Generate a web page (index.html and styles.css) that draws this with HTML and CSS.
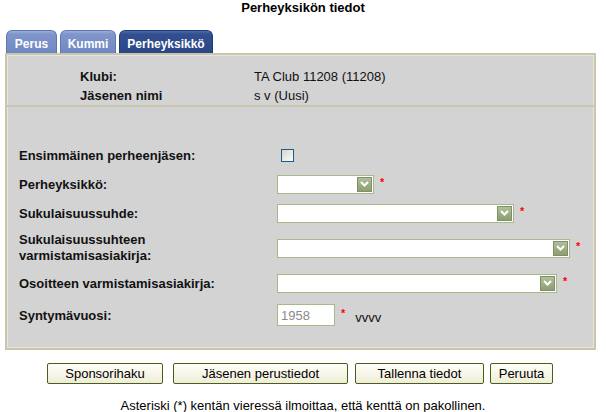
FILE: index.html
```html
<!DOCTYPE html>
<html lang="fi">
<head>
<meta charset="utf-8">
<title>Perheyksikön tiedot</title>
<link rel="stylesheet" href="styles.css">
</head>
<body>
<h1 class="title">Perheyksikön tiedot</h1>
<div class="tabs">
  <span class="tab">Perus</span>
  <span class="tab">Kummi</span>
  <span class="tab tab--active">Perheyksikkö</span>
</div>
<div class="panel">
  <div class="info">
    <div class="info-label">Klubi:</div><div class="info-value">TA Club 11208 (11208)</div>
    <div class="info-label">Jäsenen nimi</div><div class="info-value">s v (Uusi)</div>
  </div>
  <div class="form">
    <div class="row">
      <div class="label">Ensimmäinen perheenjäsen:</div>
      <div class="control"><span class="checkbox"></span></div>
    </div>
    <div class="row">
      <div class="label">Perheyksikkö:</div>
      <div class="control">
        <span class="select select--s"><span class="arrow"><svg width="9" height="6" viewBox="0 0 9 6"><path d="M1 1 L4.5 4.5 L8 1" fill="none" stroke="#fff" stroke-width="2"/></svg></span></span>
        <span class="req">*</span>
      </div>
    </div>
    <div class="row">
      <div class="label">Sukulaisuussuhde:</div>
      <div class="control">
        <span class="select select--m"><span class="arrow"><svg width="9" height="6" viewBox="0 0 9 6"><path d="M1 1 L4.5 4.5 L8 1" fill="none" stroke="#fff" stroke-width="2"/></svg></span></span>
        <span class="req">*</span>
      </div>
    </div>
    <div class="row row--tall">
      <div class="label">Sukulaisuussuhteen<br>varmistamisasiakirja:</div>
      <div class="control">
        <span class="select select--xl"><span class="arrow"><svg width="9" height="6" viewBox="0 0 9 6"><path d="M1 1 L4.5 4.5 L8 1" fill="none" stroke="#fff" stroke-width="2"/></svg></span></span>
        <span class="req">*</span>
      </div>
    </div>
    <div class="row">
      <div class="label">Osoitteen varmistamisasiakirja:</div>
      <div class="control">
        <span class="select select--l"><span class="arrow"><svg width="9" height="6" viewBox="0 0 9 6"><path d="M1 1 L4.5 4.5 L8 1" fill="none" stroke="#fff" stroke-width="2"/></svg></span></span>
        <span class="req">*</span>
      </div>
    </div>
    <div class="row row--last">
      <div class="label">Syntymävuosi:</div>
      <div class="control">
        <span class="year">1958</span>
        <span class="req">*</span>
        <span class="hint">vvvv</span>
      </div>
    </div>
  </div>
</div>
<div class="buttons">
  <button class="btn btn--sponsor">Sponsorihaku</button>
  <button class="btn btn--member">Jäsenen perustiedot</button>
  <button class="btn btn--save">Tallenna tiedot</button>
  <button class="btn btn--cancel">Peruuta</button>
</div>
<p class="note">Asteriski (*) kentän vieressä ilmoittaa, että kenttä on pakollinen.</p>
</body>
</html>
```
FILE: styles.css
```css
* { box-sizing: border-box; }
html, body { margin: 0; padding: 0; background: #fff; }
body {
  font-family: "Liberation Sans", Arial, sans-serif;
  font-size: 13px;
  color: #111;
  width: 606px;
}
.title {
  margin: 0;
  font-size: 13px;
  font-weight: bold;
  line-height: 16px;
  text-align: center;
  color: #000;
}
.tabs {
  display: flex;
  gap: 3px;
  margin-top: 14px;
  padding-left: 6px;
  height: 23px;
}
.tab {
  display: flex;
  align-items: center;
  justify-content: center;
  height: 23px;
  padding: 3px 8px 0;
  font-size: 12px;
  font-weight: bold;
  color: #fff;
  border: 1px solid #5f75ad;
  border-bottom: none;
  border-radius: 6px 6px 0 0;
  background: linear-gradient(#9cafdc 0, #8096cb 3px, #7088c2 100%);
}
.tab:nth-child(1) { width: 51px; }
.tab:nth-child(2) { width: 56px; }
.tab--active {
  width: 94px;
  border-color: #203a78;
  background: linear-gradient(#4f6aa8 0, #32508f 3px, #2a4686 100%);
}
.panel {
  width: 591px;
  margin-left: 5px;
  background: #d3d3d3;
  border: 2px solid #c9c5ae;
  box-shadow: inset 0 0 0 1px #e9e6d6;
}
.info {
  display: grid;
  grid-template-columns: 174px auto;
  grid-auto-rows: 19px;
  align-items: center;
  padding: 12px 0 0 73px;
  height: 52px;
  border-bottom: 2px solid #c9c5ae;
}
.info-label { font-weight: bold; }
.form {
  padding: 38px 0 22px 12px;
  display: flex;
  flex-direction: column;
  gap: 9px;
}
.row {
  display: flex;
  align-items: center;
  min-height: 20px;
}
.row--tall { min-height: 32px; line-height: 16px; }
.row--last { margin-top: 2px; min-height: 22px; }
.label {
  width: 258px;
  font-weight: bold;
}
.control {
  display: flex;
  align-items: center;
}
.checkbox {
  width: 13px;
  height: 13px;
  margin-left: 4px;
  border: 1px solid #1f5a8e;
  background: linear-gradient(135deg, #d6d6d0, #fbfbf9);
}
.select {
  display: flex;
  justify-content: flex-end;
  align-items: center;
  height: 19px;
  padding-right: 1px;
  background: #fff;
  border: 1px solid #a6b98b;
}
.select--s { width: 97px; }
.select--m { width: 237px; }
.select--xl { width: 293px; }
.select--l { width: 280px; }
.arrow {
  display: flex;
  align-items: center;
  justify-content: center;
  width: 15px;
  height: 15px;
  border: 1px solid #7f9068;
  background: linear-gradient(#b0bf98, #8c9e72);
}
.arrow svg { display: block; }
.req {
  color: #f00;
  font-size: 11px;
  margin-left: 6px;
  margin-top: -4px;
  font-weight: bold;
}
.year {
  display: flex;
  align-items: center;
  width: 58px;
  height: 22px;
  padding-left: 3px;
  border: 1px solid #a6b98b;
  background: #fff;
  color: #8a8a8a;
  font-size: 13px;
}
.hint {
  margin-left: 10px;
  margin-top: 4px;
  font-size: 13px;
  color: #111;
}
.buttons {
  display: flex;
  padding-left: 47px;
  margin-top: 13px;
  height: 21px;
}
.btn {
  height: 21px;
  padding: 0;
  font-family: "Liberation Sans", Arial, sans-serif;
  font-size: 13px;
  color: #000;
  border: 1px solid #46601a;
  border-radius: 2px;
  background: linear-gradient(#fefef6, #efedd9);
}
.btn--sponsor { width: 116px; }
.btn--member { width: 175px; margin-left: 10px; }
.btn--save { width: 129px; margin-left: 7px; }
.btn--cancel { width: 63px; margin-left: 6px; }
.note {
  margin: 14px 0 0;
  font-size: 13px;
  line-height: 16px;
  text-align: center;
  color: #000;
}
```
